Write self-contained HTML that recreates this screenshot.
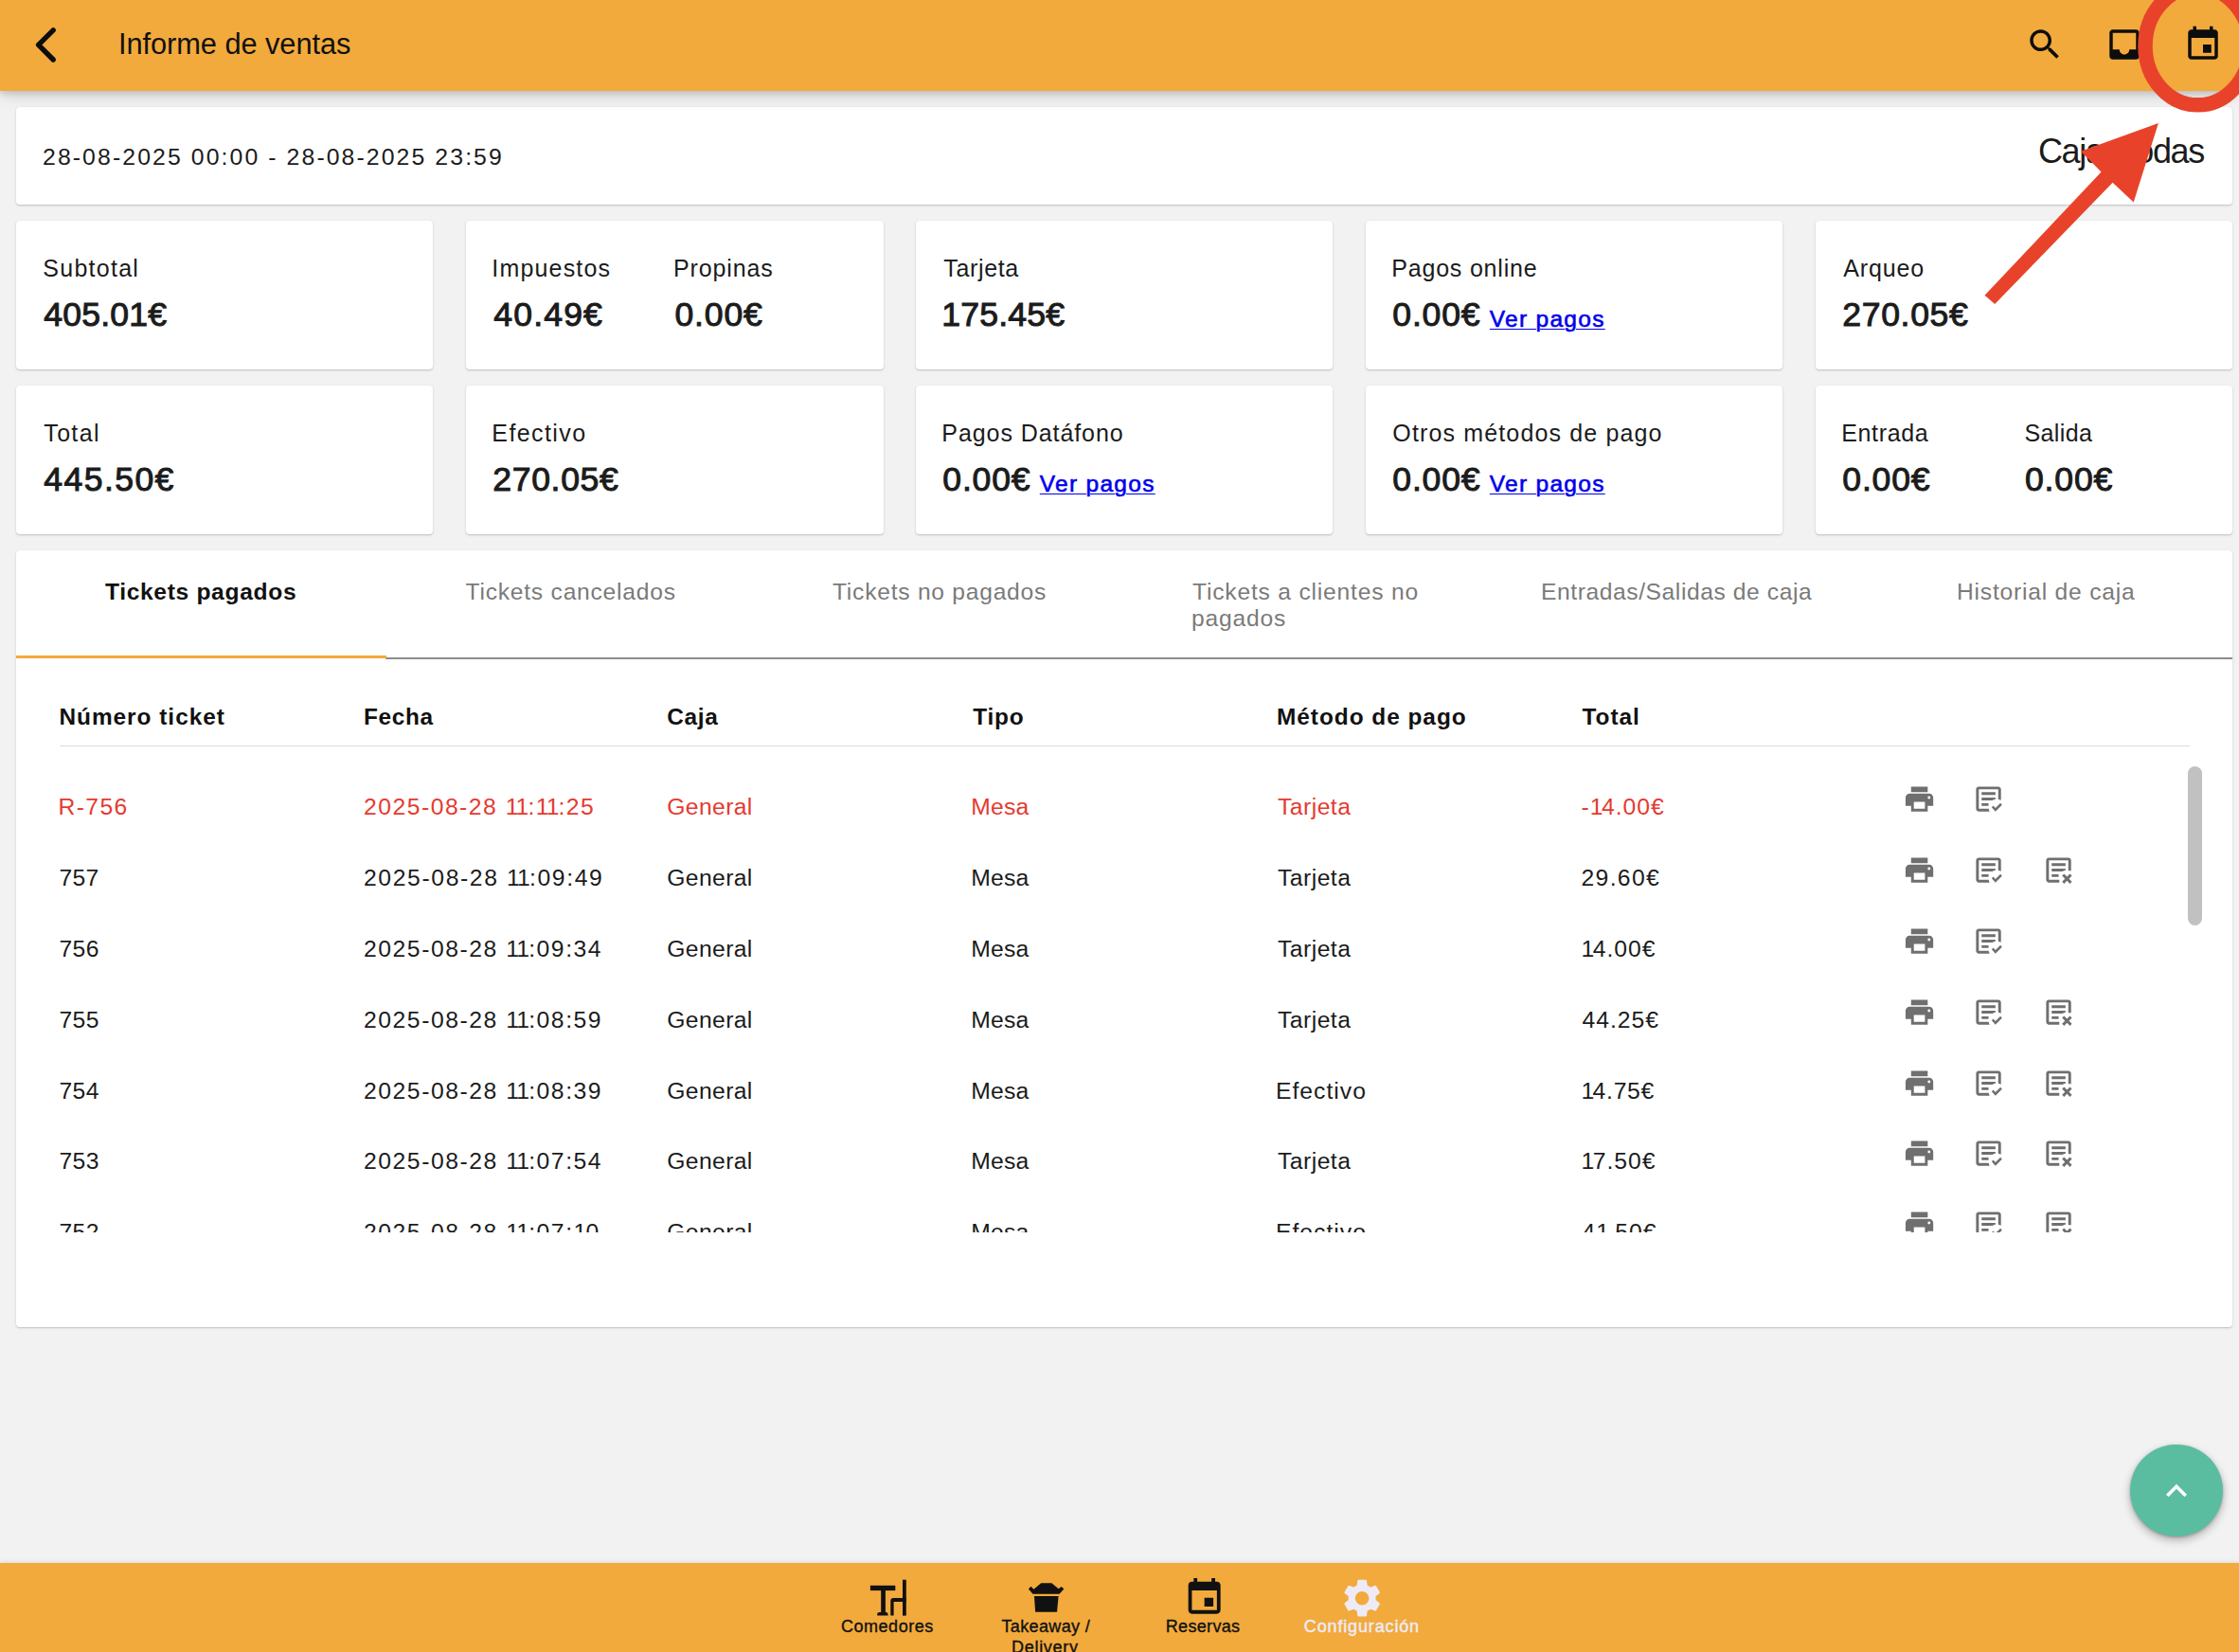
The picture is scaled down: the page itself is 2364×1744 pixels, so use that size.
<!DOCTYPE html>
<html><head><meta charset="utf-8">
<style>
html,body{margin:0;padding:0;}
body{width:2364px;height:1744px;position:relative;overflow:hidden;background:#f2f2f2;font-family:"Liberation Sans", sans-serif;}
.t{position:absolute;white-space:nowrap;line-height:1;z-index:3;}
.ic{position:absolute;display:block;z-index:3;}
.hdr{position:absolute;left:0;top:0;width:2364px;height:96px;background:#f2aa3c;box-shadow:0 2px 6px rgba(0,0,0,0.13),0 5px 14px rgba(0,0,0,0.15);z-index:2;}
.card{position:absolute;background:#fff;border-radius:4px;box-shadow:0 1px 2.5px rgba(0,0,0,0.17),0 0.5px 1px rgba(0,0,0,0.06);}
.clip{position:absolute;left:0;top:787px;width:2364px;height:514px;overflow:hidden;}
.clip .t,.clip .ic{}
.nav{position:absolute;left:0;top:1650px;width:2364px;height:94px;background:#f2aa3c;box-shadow:0 -1px 4px rgba(0,0,0,0.10);}
.fab{position:absolute;left:2249.3px;top:1524.8px;width:97.6px;height:97.6px;border-radius:50%;background:#5bbd9f;box-shadow:0 4px 10px rgba(0,0,0,0.28),0 1px 3px rgba(0,0,0,0.2);}
</style></head>
<body>
<div class="hdr">
<svg class="ic" style="left:0;top:0" width="120" height="96" viewBox="0 0 120 96"><polyline points="56.2,31.8 40.6,47.4 56.2,63" fill="none" stroke="#0d0d0d" stroke-width="5.4" stroke-linecap="round" stroke-linejoin="round"/></svg>
<svg class="ic" style="left:2138.00px;top:26.30px;width:42px;height:42px" viewBox="0 0 24 24"><path fill="#0d0d0d" d="M15.5 14h-.79l-.28-.27C15.41 12.59 16 11.11 16 9.5 16 5.91 13.09 3 9.5 3S3 5.91 3 9.5 5.91 16 9.5 16c1.61 0 3.09-.59 4.23-1.57l.27.28v.79l5 4.99L20.49 19l-4.99-5zm-6 0C7.01 14 5 11.99 5 9.5S7.01 5 9.5 5 14 7.01 14 9.5 11.99 14 9.5 14z"/></svg><svg class="ic" style="left:2221.50px;top:26.30px;width:42px;height:42px" viewBox="0 0 24 24"><path fill="#0d0d0d" d="M19 3H4.99c-1.11 0-1.98.9-1.98 2L3 19c0 1.1.88 2 1.99 2H19c1.1 0 2-.9 2-2V5c0-1.1-.9-2-2-2zm0 12h-4c0 1.66-1.35 3-3 3s-3-1.34-3-3H4.99V5H19v10z"/></svg><svg class="ic" style="left:2305.00px;top:25.90px;width:42px;height:42px" viewBox="0 0 24 24"><path fill="#0d0d0d" d="M17 12h-5v5h5v-5zM16 1v2H8V1H6v2H5c-1.11 0-1.99.9-1.99 2L3 19c0 1.1.89 2 2 2h14c1.1 0 2-.9 2-2V5c0-1.1-.9-2-2-2h-1V1h-2zm3 18H5V8h14v11z"/></svg>
</div>
<div class="card" style="left:17px;top:113px;width:2340px;height:103px;"></div>
<div class="card" style="left:17px;top:233px;width:440px;height:157px;"></div>
<div class="card" style="left:492px;top:233px;width:441px;height:157px;"></div>
<div class="card" style="left:967px;top:233px;width:440px;height:157px;"></div>
<div class="card" style="left:1442px;top:233px;width:440px;height:157px;"></div>
<div class="card" style="left:1917px;top:233px;width:440px;height:157px;"></div>
<div class="card" style="left:17px;top:407px;width:440px;height:157px;"></div>
<div class="card" style="left:492px;top:407px;width:441px;height:157px;"></div>
<div class="card" style="left:967px;top:407px;width:440px;height:157px;"></div>
<div class="card" style="left:1442px;top:407px;width:440px;height:157px;"></div>
<div class="card" style="left:1917px;top:407px;width:440px;height:157px;"></div>
<div class="card" style="left:17px;top:581px;width:2340px;height:820px;"></div>
<div style="position:absolute;left:407px;top:694px;width:1950px;height:2px;background:#8c8c8c;"></div>
<div style="position:absolute;left:17px;top:692px;width:391px;height:3px;background:#f2aa3c;"></div>
<div style="position:absolute;left:63px;top:787px;width:2249px;height:1px;background:#dcdcdc;"></div>
<div style="position:absolute;left:2310px;top:809px;width:15px;height:168px;border-radius:8px;background:#c1c1c1;"></div>
<div class="t" style="left:125.00px;top:31.93px;font-size:30.8px;font-weight:400;letter-spacing:-0.069px;color:#111;">Informe de ventas</div>
<div class="t" style="left:45.00px;top:154.01px;font-size:24.8px;font-weight:400;letter-spacing:2.094px;color:#1b1b1b;">28-08-2025 00:00 - 28-08-2025 23:59</div>
<div class="t" style="left:2151.89px;top:142.33px;font-size:36.0px;font-weight:400;letter-spacing:-1.3px;color:#1b1b1b;">Caja: Todas</div>
<div class="t" style="left:45.30px;top:271.44px;font-size:25px;font-weight:400;letter-spacing:1.26px;color:#1b1b1b;">Subtotal</div>
<div class="t" style="left:46.30px;top:315.46px;font-size:35.6px;font-weight:400;letter-spacing:0.197px;color:#1b1b1b;-webkit-text-stroke:1.0px #1b1b1b;">405.01€</div>
<div class="t" style="left:519.30px;top:271.44px;font-size:25px;font-weight:400;letter-spacing:1.171px;color:#1b1b1b;">Impuestos</div>
<div class="t" style="left:521.30px;top:315.46px;font-size:35.6px;font-weight:400;letter-spacing:1.154px;color:#1b1b1b;-webkit-text-stroke:1.0px #1b1b1b;">40.49€</div>
<div class="t" style="left:711.00px;top:271.44px;font-size:25px;font-weight:400;letter-spacing:0.876px;color:#1b1b1b;">Propinas</div>
<div class="t" style="left:712.50px;top:315.46px;font-size:35.6px;font-weight:400;letter-spacing:0.814px;color:#1b1b1b;-webkit-text-stroke:1.0px #1b1b1b;">0.00€</div>
<div class="t" style="left:996.30px;top:271.44px;font-size:25px;font-weight:400;letter-spacing:0.645px;color:#1b1b1b;">Tarjeta</div>
<div class="t" style="left:994.30px;top:315.46px;font-size:35.6px;font-weight:400;letter-spacing:0.197px;color:#1b1b1b;-webkit-text-stroke:1.0px #1b1b1b;">175.45€</div>
<div class="t" style="left:1469.30px;top:271.44px;font-size:25px;font-weight:400;letter-spacing:0.795px;color:#1b1b1b;">Pagos online</div>
<div class="t" style="left:1470.30px;top:315.46px;font-size:35.6px;font-weight:400;letter-spacing:0.814px;color:#1b1b1b;-webkit-text-stroke:1.0px #1b1b1b;">0.00€</div>
<div class="t" style="left:1946.30px;top:271.44px;font-size:25px;font-weight:400;letter-spacing:0.838px;color:#1b1b1b;">Arqueo</div>
<div class="t" style="left:1945.30px;top:315.46px;font-size:35.6px;font-weight:400;letter-spacing:0.647px;color:#1b1b1b;-webkit-text-stroke:1.0px #1b1b1b;">270.05€</div>
<div class="t" style="left:46.30px;top:445.14px;font-size:25px;font-weight:400;letter-spacing:1.337px;color:#1b1b1b;">Total</div>
<div class="t" style="left:46.30px;top:489.26px;font-size:35.6px;font-weight:400;letter-spacing:1.413px;color:#1b1b1b;-webkit-text-stroke:1.0px #1b1b1b;">445.50€</div>
<div class="t" style="left:519.30px;top:445.14px;font-size:25px;font-weight:400;letter-spacing:1.411px;color:#1b1b1b;">Efectivo</div>
<div class="t" style="left:520.30px;top:489.26px;font-size:35.6px;font-weight:400;letter-spacing:0.647px;color:#1b1b1b;-webkit-text-stroke:1.0px #1b1b1b;">270.05€</div>
<div class="t" style="left:994.30px;top:445.14px;font-size:25px;font-weight:400;letter-spacing:0.931px;color:#1b1b1b;">Pagos Datáfono</div>
<div class="t" style="left:995.30px;top:489.26px;font-size:35.6px;font-weight:400;letter-spacing:0.814px;color:#1b1b1b;-webkit-text-stroke:1.0px #1b1b1b;">0.00€</div>
<div class="t" style="left:1470.30px;top:445.14px;font-size:25px;font-weight:400;letter-spacing:1.147px;color:#1b1b1b;">Otros métodos de pago</div>
<div class="t" style="left:1470.30px;top:489.26px;font-size:35.6px;font-weight:400;letter-spacing:0.814px;color:#1b1b1b;-webkit-text-stroke:1.0px #1b1b1b;">0.00€</div>
<div class="t" style="left:1944.30px;top:445.14px;font-size:25px;font-weight:400;letter-spacing:0.624px;color:#1b1b1b;">Entrada</div>
<div class="t" style="left:1945.30px;top:489.26px;font-size:35.6px;font-weight:400;letter-spacing:0.814px;color:#1b1b1b;-webkit-text-stroke:1.0px #1b1b1b;">0.00€</div>
<div class="t" style="left:2137.50px;top:445.14px;font-size:25px;font-weight:400;letter-spacing:0.382px;color:#1b1b1b;">Salida</div>
<div class="t" style="left:2138.00px;top:489.26px;font-size:35.6px;font-weight:400;letter-spacing:0.814px;color:#1b1b1b;-webkit-text-stroke:1.0px #1b1b1b;">0.00€</div>
<div class="t" style="left:110.90px;top:612.78px;font-size:24.6px;font-weight:700;letter-spacing:0.672px;color:#111;">Tickets pagados</div>
<div class="t" style="left:491.50px;top:612.78px;font-size:24.6px;font-weight:400;letter-spacing:0.78px;color:#7a7a7a;">Tickets cancelados</div>
<div class="t" style="left:879.00px;top:612.78px;font-size:24.6px;font-weight:400;letter-spacing:0.761px;color:#7a7a7a;">Tickets no pagados</div>
<div class="t" style="left:1259.00px;top:612.78px;font-size:24.6px;font-weight:400;letter-spacing:0.809px;color:#7a7a7a;">Tickets a clientes no</div>
<div class="t" style="left:1258.00px;top:640.98px;font-size:24.6px;font-weight:400;letter-spacing:0.822px;color:#7a7a7a;">pagados</div>
<div class="t" style="left:1627.00px;top:612.78px;font-size:24.6px;font-weight:400;letter-spacing:0.592px;color:#7a7a7a;">Entradas/Salidas de caja</div>
<div class="t" style="left:2066.00px;top:612.78px;font-size:24.6px;font-weight:400;letter-spacing:0.794px;color:#7a7a7a;">Historial de caja</div>
<div class="t" style="left:62.40px;top:744.95px;font-size:24.4px;font-weight:700;letter-spacing:0.99px;color:#111;">Número ticket</div>
<div class="t" style="left:384.00px;top:744.95px;font-size:24.4px;font-weight:700;letter-spacing:0.618px;color:#111;">Fecha</div>
<div class="t" style="left:704.30px;top:744.95px;font-size:24.4px;font-weight:700;letter-spacing:0.681px;color:#111;">Caja</div>
<div class="t" style="left:1027.30px;top:744.95px;font-size:24.4px;font-weight:700;letter-spacing:0.789px;color:#111;">Tipo</div>
<div class="t" style="left:1348.00px;top:744.95px;font-size:24.4px;font-weight:700;letter-spacing:0.978px;color:#111;">Método de pago</div>
<div class="t" style="left:1670.50px;top:744.95px;font-size:24.4px;font-weight:700;letter-spacing:0.957px;color:#111;">Total</div>
<div class="t" style="left:888.00px;top:1708.16px;font-size:18px;font-weight:400;letter-spacing:0.52px;color:#111;-webkit-text-stroke:0.35px #111;">Comedores</div>
<div class="t" style="left:1057.50px;top:1708.16px;font-size:18px;font-weight:400;letter-spacing:0.351px;color:#111;-webkit-text-stroke:0.35px #111;">Takeaway /</div>
<div class="t" style="left:1068.00px;top:1730.16px;font-size:18px;font-weight:400;letter-spacing:0.712px;color:#111;-webkit-text-stroke:0.35px #111;">Delivery</div>
<div class="t" style="left:1230.80px;top:1708.16px;font-size:18px;font-weight:400;letter-spacing:0.325px;color:#111;-webkit-text-stroke:0.35px #111;">Reservas</div>
<div class="t" style="left:1376.80px;top:1708.16px;font-size:18px;font-weight:400;letter-spacing:0.854px;color:#eeebf6;-webkit-text-stroke:0.45px #eeebf6;">Configuración</div>
<div class="t" style="left:1572.80px;top:324.86px;font-size:24.5px;font-weight:400;letter-spacing:1.29px;color:#0000ee;text-decoration:underline;text-underline-offset:1.6px;text-decoration-thickness:1.3px;-webkit-text-stroke:0.6px #0000ee;">Ver pagos</div>
<div class="t" style="left:1097.80px;top:498.66px;font-size:24.5px;font-weight:400;letter-spacing:1.29px;color:#0000ee;text-decoration:underline;text-underline-offset:1.6px;text-decoration-thickness:1.3px;-webkit-text-stroke:0.6px #0000ee;">Ver pagos</div>
<div class="t" style="left:1572.80px;top:498.66px;font-size:24.5px;font-weight:400;letter-spacing:1.29px;color:#0000ee;text-decoration:underline;text-underline-offset:1.6px;text-decoration-thickness:1.3px;-webkit-text-stroke:0.6px #0000ee;">Ver pagos</div>
<div class="clip">
<div style="position:absolute;left:0;top:-787px;width:2364px;height:1744px;">
<div class="t" style="left:61.40px;top:840.39px;font-size:24.7px;font-weight:400;letter-spacing:1.423px;color:#e53a2f;">R-756</div>
<div class="t" style="left:384.00px;top:840.39px;font-size:24.7px;font-weight:400;letter-spacing:1.502px;color:#e53a2f;">2025-08-28 <span style="letter-spacing:-0.968px">1</span><span style="letter-spacing:-0.968px">1</span>:<span style="letter-spacing:-0.968px">1</span><span style="letter-spacing:-0.968px">1</span>:25</div>
<div class="t" style="left:704.30px;top:840.39px;font-size:24.7px;font-weight:400;letter-spacing:0.359px;color:#e53a2f;">General</div>
<div class="t" style="left:1025.30px;top:840.39px;font-size:24.7px;font-weight:400;letter-spacing:0.22px;color:#e53a2f;">Mesa</div>
<div class="t" style="left:1349.00px;top:840.39px;font-size:24.7px;font-weight:400;letter-spacing:0.472px;color:#e53a2f;">Tarjeta</div>
<div class="t" style="left:1669.50px;top:840.39px;font-size:24.7px;font-weight:400;letter-spacing:1.0px;color:#e53a2f;">-<span style="letter-spacing:-1.470px">1</span>4.00€</div>
<div class="t" style="left:62.40px;top:915.19px;font-size:24.7px;font-weight:400;letter-spacing:0.27px;color:#1b1b1b;">757</div>
<div class="t" style="left:384.00px;top:915.19px;font-size:24.7px;font-weight:400;letter-spacing:1.626px;color:#1b1b1b;">2025-08-28 <span style="letter-spacing:-0.844px">1</span><span style="letter-spacing:-0.844px">1</span>:09:49</div>
<div class="t" style="left:704.30px;top:915.19px;font-size:24.7px;font-weight:400;letter-spacing:0.359px;color:#1b1b1b;">General</div>
<div class="t" style="left:1025.30px;top:915.19px;font-size:24.7px;font-weight:400;letter-spacing:0.22px;color:#1b1b1b;">Mesa</div>
<div class="t" style="left:1349.00px;top:915.19px;font-size:24.7px;font-weight:400;letter-spacing:0.472px;color:#1b1b1b;">Tarjeta</div>
<div class="t" style="left:1669.50px;top:915.19px;font-size:24.7px;font-weight:400;letter-spacing:1.344px;color:#1b1b1b;">29.60€</div>
<div class="t" style="left:62.40px;top:989.99px;font-size:24.7px;font-weight:400;letter-spacing:0.5px;color:#1b1b1b;">756</div>
<div class="t" style="left:384.00px;top:989.99px;font-size:24.7px;font-weight:400;letter-spacing:1.56px;color:#1b1b1b;">2025-08-28 <span style="letter-spacing:-0.910px">1</span><span style="letter-spacing:-0.910px">1</span>:09:34</div>
<div class="t" style="left:704.30px;top:989.99px;font-size:24.7px;font-weight:400;letter-spacing:0.359px;color:#1b1b1b;">General</div>
<div class="t" style="left:1025.30px;top:989.99px;font-size:24.7px;font-weight:400;letter-spacing:0.22px;color:#1b1b1b;">Mesa</div>
<div class="t" style="left:1349.00px;top:989.99px;font-size:24.7px;font-weight:400;letter-spacing:0.472px;color:#1b1b1b;">Tarjeta</div>
<div class="t" style="left:1669.50px;top:989.99px;font-size:24.7px;font-weight:400;letter-spacing:1.0px;color:#1b1b1b;"><span style="letter-spacing:-1.470px">1</span>4.00€</div>
<div class="t" style="left:62.40px;top:1064.79px;font-size:24.7px;font-weight:400;letter-spacing:0.5px;color:#1b1b1b;">755</div>
<div class="t" style="left:384.00px;top:1064.79px;font-size:24.7px;font-weight:400;letter-spacing:1.56px;color:#1b1b1b;">2025-08-28 <span style="letter-spacing:-0.910px">1</span><span style="letter-spacing:-0.910px">1</span>:08:59</div>
<div class="t" style="left:704.30px;top:1064.79px;font-size:24.7px;font-weight:400;letter-spacing:0.359px;color:#1b1b1b;">General</div>
<div class="t" style="left:1025.30px;top:1064.79px;font-size:24.7px;font-weight:400;letter-spacing:0.22px;color:#1b1b1b;">Mesa</div>
<div class="t" style="left:1349.00px;top:1064.79px;font-size:24.7px;font-weight:400;letter-spacing:0.472px;color:#1b1b1b;">Tarjeta</div>
<div class="t" style="left:1670.50px;top:1064.79px;font-size:24.7px;font-weight:400;letter-spacing:1.0px;color:#1b1b1b;">44.25€</div>
<div class="t" style="left:62.40px;top:1139.59px;font-size:24.7px;font-weight:400;letter-spacing:0.5px;color:#1b1b1b;">754</div>
<div class="t" style="left:384.00px;top:1139.59px;font-size:24.7px;font-weight:400;letter-spacing:1.56px;color:#1b1b1b;">2025-08-28 <span style="letter-spacing:-0.910px">1</span><span style="letter-spacing:-0.910px">1</span>:08:39</div>
<div class="t" style="left:704.30px;top:1139.59px;font-size:24.7px;font-weight:400;letter-spacing:0.359px;color:#1b1b1b;">General</div>
<div class="t" style="left:1025.30px;top:1139.59px;font-size:24.7px;font-weight:400;letter-spacing:0.22px;color:#1b1b1b;">Mesa</div>
<div class="t" style="left:1347.00px;top:1139.59px;font-size:24.7px;font-weight:400;letter-spacing:1.016px;color:#1b1b1b;">Efectivo</div>
<div class="t" style="left:1669.50px;top:1139.59px;font-size:24.7px;font-weight:400;letter-spacing:0.758px;color:#1b1b1b;"><span style="letter-spacing:-1.712px">1</span>4.75€</div>
<div class="t" style="left:62.40px;top:1214.39px;font-size:24.7px;font-weight:400;letter-spacing:0.5px;color:#1b1b1b;">753</div>
<div class="t" style="left:384.00px;top:1214.39px;font-size:24.7px;font-weight:400;letter-spacing:1.56px;color:#1b1b1b;">2025-08-28 <span style="letter-spacing:-0.910px">1</span><span style="letter-spacing:-0.910px">1</span>:07:54</div>
<div class="t" style="left:704.30px;top:1214.39px;font-size:24.7px;font-weight:400;letter-spacing:0.359px;color:#1b1b1b;">General</div>
<div class="t" style="left:1025.30px;top:1214.39px;font-size:24.7px;font-weight:400;letter-spacing:0.22px;color:#1b1b1b;">Mesa</div>
<div class="t" style="left:1349.00px;top:1214.39px;font-size:24.7px;font-weight:400;letter-spacing:0.472px;color:#1b1b1b;">Tarjeta</div>
<div class="t" style="left:1669.50px;top:1214.39px;font-size:24.7px;font-weight:400;letter-spacing:1.0px;color:#1b1b1b;"><span style="letter-spacing:-1.470px">1</span>7.50€</div>
<div class="t" style="left:62.40px;top:1289.19px;font-size:24.7px;font-weight:400;letter-spacing:0.5px;color:#1b1b1b;">752</div>
<div class="t" style="left:384.00px;top:1289.19px;font-size:24.7px;font-weight:400;letter-spacing:1.56px;color:#1b1b1b;">2025-08-28 <span style="letter-spacing:-0.910px">1</span><span style="letter-spacing:-0.910px">1</span>:07:<span style="letter-spacing:-0.910px">1</span>0</div>
<div class="t" style="left:704.30px;top:1289.19px;font-size:24.7px;font-weight:400;letter-spacing:0.359px;color:#1b1b1b;">General</div>
<div class="t" style="left:1025.30px;top:1289.19px;font-size:24.7px;font-weight:400;letter-spacing:0.22px;color:#1b1b1b;">Mesa</div>
<div class="t" style="left:1347.00px;top:1289.19px;font-size:24.7px;font-weight:400;letter-spacing:1.016px;color:#1b1b1b;">Efectivo</div>
<div class="t" style="left:1670.50px;top:1289.19px;font-size:24.7px;font-weight:400;letter-spacing:1.0px;color:#1b1b1b;">4<span style="letter-spacing:-1.470px">1</span>.50€</div>
<svg class="ic" style="left:2009.10px;top:826.40px;width:35.1px;height:35.1px" viewBox="0 0 24 24"><path fill="#6f6f6f" d="M18,3H6V7H18M19,12A1,1 0 0,1 18,11A1,1 0 0,1 19,10A1,1 0 0,1 20,11A1,1 0 0,1 19,12M16,19H8V14H16M19,8H5A3,3 0 0,0 2,11V17H6V21H18V17H22V11A3,3 0 0,0 19,8Z"/></svg>
<svg class="ic" style="left:2082.40px;top:826.40px;width:35.1px;height:35.1px" viewBox="0 0 24 24"><path fill="#6f6f6f" d="M17,21L14.25,18L15.41,16.84L17,18.43L20.59,14.84L21.75,16.25M12.8,21H5C3.89,21 3,20.11 3,19V5C3,3.89 3.89,3 5,3H19C20.11,3 21,3.89 21,5V12.8C20.39,12.45 19.72,12.2 19,12.08V5H5V19H12.08C12.2,19.72 12.45,20.39 12.8,21M12,17H7V15H12M14.68,13H7V11H17V12.1C16.15,12.25 15.37,12.57 14.68,13M17,9H7V7H17"/></svg>
<svg class="ic" style="left:2009.10px;top:901.20px;width:35.1px;height:35.1px" viewBox="0 0 24 24"><path fill="#6f6f6f" d="M18,3H6V7H18M19,12A1,1 0 0,1 18,11A1,1 0 0,1 19,10A1,1 0 0,1 20,11A1,1 0 0,1 19,12M16,19H8V14H16M19,8H5A3,3 0 0,0 2,11V17H6V21H18V17H22V11A3,3 0 0,0 19,8Z"/></svg>
<svg class="ic" style="left:2082.40px;top:901.20px;width:35.1px;height:35.1px" viewBox="0 0 24 24"><path fill="#6f6f6f" d="M17,21L14.25,18L15.41,16.84L17,18.43L20.59,14.84L21.75,16.25M12.8,21H5C3.89,21 3,20.11 3,19V5C3,3.89 3.89,3 5,3H19C20.11,3 21,3.89 21,5V12.8C20.39,12.45 19.72,12.2 19,12.08V5H5V19H12.08C12.2,19.72 12.45,20.39 12.8,21M12,17H7V15H12M14.68,13H7V11H17V12.1C16.15,12.25 15.37,12.57 14.68,13M17,9H7V7H17"/></svg>
<svg class="ic" style="left:2155.50px;top:901.20px;width:35.1px;height:35.1px" viewBox="0 0 24 24"><path fill="#6f6f6f" d="M12.5,21H5C3.89,21 3,20.11 3,19V5C3,3.89 3.89,3 5,3H19C20.11,3 21,3.89 21,5V12.5H19V5H5V19H12.5Z M12,17H7V15H12M14.68,13H7V11H17V12.1C16.15,12.25 15.37,12.57 14.68,13M17,9H7V7H17 M15.95,14.70 L18.05,16.80 L20.15,14.70 L21.60,16.15 L19.50,18.25 L21.60,20.35 L20.15,21.80 L18.05,19.70 L15.95,21.80 L14.50,20.35 L16.60,18.25 L14.50,16.15Z"/></svg>
<svg class="ic" style="left:2009.10px;top:976.00px;width:35.1px;height:35.1px" viewBox="0 0 24 24"><path fill="#6f6f6f" d="M18,3H6V7H18M19,12A1,1 0 0,1 18,11A1,1 0 0,1 19,10A1,1 0 0,1 20,11A1,1 0 0,1 19,12M16,19H8V14H16M19,8H5A3,3 0 0,0 2,11V17H6V21H18V17H22V11A3,3 0 0,0 19,8Z"/></svg>
<svg class="ic" style="left:2082.40px;top:976.00px;width:35.1px;height:35.1px" viewBox="0 0 24 24"><path fill="#6f6f6f" d="M17,21L14.25,18L15.41,16.84L17,18.43L20.59,14.84L21.75,16.25M12.8,21H5C3.89,21 3,20.11 3,19V5C3,3.89 3.89,3 5,3H19C20.11,3 21,3.89 21,5V12.8C20.39,12.45 19.72,12.2 19,12.08V5H5V19H12.08C12.2,19.72 12.45,20.39 12.8,21M12,17H7V15H12M14.68,13H7V11H17V12.1C16.15,12.25 15.37,12.57 14.68,13M17,9H7V7H17"/></svg>
<svg class="ic" style="left:2009.10px;top:1050.80px;width:35.1px;height:35.1px" viewBox="0 0 24 24"><path fill="#6f6f6f" d="M18,3H6V7H18M19,12A1,1 0 0,1 18,11A1,1 0 0,1 19,10A1,1 0 0,1 20,11A1,1 0 0,1 19,12M16,19H8V14H16M19,8H5A3,3 0 0,0 2,11V17H6V21H18V17H22V11A3,3 0 0,0 19,8Z"/></svg>
<svg class="ic" style="left:2082.40px;top:1050.80px;width:35.1px;height:35.1px" viewBox="0 0 24 24"><path fill="#6f6f6f" d="M17,21L14.25,18L15.41,16.84L17,18.43L20.59,14.84L21.75,16.25M12.8,21H5C3.89,21 3,20.11 3,19V5C3,3.89 3.89,3 5,3H19C20.11,3 21,3.89 21,5V12.8C20.39,12.45 19.72,12.2 19,12.08V5H5V19H12.08C12.2,19.72 12.45,20.39 12.8,21M12,17H7V15H12M14.68,13H7V11H17V12.1C16.15,12.25 15.37,12.57 14.68,13M17,9H7V7H17"/></svg>
<svg class="ic" style="left:2155.50px;top:1050.80px;width:35.1px;height:35.1px" viewBox="0 0 24 24"><path fill="#6f6f6f" d="M12.5,21H5C3.89,21 3,20.11 3,19V5C3,3.89 3.89,3 5,3H19C20.11,3 21,3.89 21,5V12.5H19V5H5V19H12.5Z M12,17H7V15H12M14.68,13H7V11H17V12.1C16.15,12.25 15.37,12.57 14.68,13M17,9H7V7H17 M15.95,14.70 L18.05,16.80 L20.15,14.70 L21.60,16.15 L19.50,18.25 L21.60,20.35 L20.15,21.80 L18.05,19.70 L15.95,21.80 L14.50,20.35 L16.60,18.25 L14.50,16.15Z"/></svg>
<svg class="ic" style="left:2009.10px;top:1125.60px;width:35.1px;height:35.1px" viewBox="0 0 24 24"><path fill="#6f6f6f" d="M18,3H6V7H18M19,12A1,1 0 0,1 18,11A1,1 0 0,1 19,10A1,1 0 0,1 20,11A1,1 0 0,1 19,12M16,19H8V14H16M19,8H5A3,3 0 0,0 2,11V17H6V21H18V17H22V11A3,3 0 0,0 19,8Z"/></svg>
<svg class="ic" style="left:2082.40px;top:1125.60px;width:35.1px;height:35.1px" viewBox="0 0 24 24"><path fill="#6f6f6f" d="M17,21L14.25,18L15.41,16.84L17,18.43L20.59,14.84L21.75,16.25M12.8,21H5C3.89,21 3,20.11 3,19V5C3,3.89 3.89,3 5,3H19C20.11,3 21,3.89 21,5V12.8C20.39,12.45 19.72,12.2 19,12.08V5H5V19H12.08C12.2,19.72 12.45,20.39 12.8,21M12,17H7V15H12M14.68,13H7V11H17V12.1C16.15,12.25 15.37,12.57 14.68,13M17,9H7V7H17"/></svg>
<svg class="ic" style="left:2155.50px;top:1125.60px;width:35.1px;height:35.1px" viewBox="0 0 24 24"><path fill="#6f6f6f" d="M12.5,21H5C3.89,21 3,20.11 3,19V5C3,3.89 3.89,3 5,3H19C20.11,3 21,3.89 21,5V12.5H19V5H5V19H12.5Z M12,17H7V15H12M14.68,13H7V11H17V12.1C16.15,12.25 15.37,12.57 14.68,13M17,9H7V7H17 M15.95,14.70 L18.05,16.80 L20.15,14.70 L21.60,16.15 L19.50,18.25 L21.60,20.35 L20.15,21.80 L18.05,19.70 L15.95,21.80 L14.50,20.35 L16.60,18.25 L14.50,16.15Z"/></svg>
<svg class="ic" style="left:2009.10px;top:1200.40px;width:35.1px;height:35.1px" viewBox="0 0 24 24"><path fill="#6f6f6f" d="M18,3H6V7H18M19,12A1,1 0 0,1 18,11A1,1 0 0,1 19,10A1,1 0 0,1 20,11A1,1 0 0,1 19,12M16,19H8V14H16M19,8H5A3,3 0 0,0 2,11V17H6V21H18V17H22V11A3,3 0 0,0 19,8Z"/></svg>
<svg class="ic" style="left:2082.40px;top:1200.40px;width:35.1px;height:35.1px" viewBox="0 0 24 24"><path fill="#6f6f6f" d="M17,21L14.25,18L15.41,16.84L17,18.43L20.59,14.84L21.75,16.25M12.8,21H5C3.89,21 3,20.11 3,19V5C3,3.89 3.89,3 5,3H19C20.11,3 21,3.89 21,5V12.8C20.39,12.45 19.72,12.2 19,12.08V5H5V19H12.08C12.2,19.72 12.45,20.39 12.8,21M12,17H7V15H12M14.68,13H7V11H17V12.1C16.15,12.25 15.37,12.57 14.68,13M17,9H7V7H17"/></svg>
<svg class="ic" style="left:2155.50px;top:1200.40px;width:35.1px;height:35.1px" viewBox="0 0 24 24"><path fill="#6f6f6f" d="M12.5,21H5C3.89,21 3,20.11 3,19V5C3,3.89 3.89,3 5,3H19C20.11,3 21,3.89 21,5V12.5H19V5H5V19H12.5Z M12,17H7V15H12M14.68,13H7V11H17V12.1C16.15,12.25 15.37,12.57 14.68,13M17,9H7V7H17 M15.95,14.70 L18.05,16.80 L20.15,14.70 L21.60,16.15 L19.50,18.25 L21.60,20.35 L20.15,21.80 L18.05,19.70 L15.95,21.80 L14.50,20.35 L16.60,18.25 L14.50,16.15Z"/></svg>
<svg class="ic" style="left:2009.10px;top:1275.20px;width:35.1px;height:35.1px" viewBox="0 0 24 24"><path fill="#6f6f6f" d="M18,3H6V7H18M19,12A1,1 0 0,1 18,11A1,1 0 0,1 19,10A1,1 0 0,1 20,11A1,1 0 0,1 19,12M16,19H8V14H16M19,8H5A3,3 0 0,0 2,11V17H6V21H18V17H22V11A3,3 0 0,0 19,8Z"/></svg>
<svg class="ic" style="left:2082.40px;top:1275.20px;width:35.1px;height:35.1px" viewBox="0 0 24 24"><path fill="#6f6f6f" d="M17,21L14.25,18L15.41,16.84L17,18.43L20.59,14.84L21.75,16.25M12.8,21H5C3.89,21 3,20.11 3,19V5C3,3.89 3.89,3 5,3H19C20.11,3 21,3.89 21,5V12.8C20.39,12.45 19.72,12.2 19,12.08V5H5V19H12.08C12.2,19.72 12.45,20.39 12.8,21M12,17H7V15H12M14.68,13H7V11H17V12.1C16.15,12.25 15.37,12.57 14.68,13M17,9H7V7H17"/></svg>
<svg class="ic" style="left:2155.50px;top:1275.20px;width:35.1px;height:35.1px" viewBox="0 0 24 24"><path fill="#6f6f6f" d="M12.5,21H5C3.89,21 3,20.11 3,19V5C3,3.89 3.89,3 5,3H19C20.11,3 21,3.89 21,5V12.5H19V5H5V19H12.5Z M12,17H7V15H12M14.68,13H7V11H17V12.1C16.15,12.25 15.37,12.57 14.68,13M17,9H7V7H17 M15.95,14.70 L18.05,16.80 L20.15,14.70 L21.60,16.15 L19.50,18.25 L21.60,20.35 L20.15,21.80 L18.05,19.70 L15.95,21.80 L14.50,20.35 L16.60,18.25 L14.50,16.15Z"/></svg>
</div>
</div>
<div class="nav">
<svg class="ic" style="left:0;top:0" width="2364" height="94" viewBox="0 1650 2364 94">
<g fill="#111">
<rect x="918.9" y="1673.8" width="26.4" height="5.3"/>
<rect x="930.2" y="1679" width="4.7" height="25"/>
<path d="M926.2,1705.6 L926.2,1704 Q926.2,1702 929,1702 L935,1702 Q937.6,1702 937.6,1704 L937.6,1705.6Z"/>
<rect x="953" y="1667.7" width="3.8" height="37.9"/>
<path d="M940.3,1705.6 L940.3,1690 Q940.3,1687 943.3,1687 L956.8,1687 L956.8,1691 L943.6,1691 L943.6,1705.6Z"/>
<path d="M1099.2,1671.2 L1110.4,1671.2 L1117.6,1677.3 L1120.8,1674.9 L1123.3,1677.6 L1118.5,1682.8 L1090.5,1682.8 L1085.9,1677.6 L1088.4,1674.8 L1091.5,1677.7Z"/>
<path d="M1092,1685 L1117.6,1685 L1116,1701.8 L1093.1,1701.8Z"/>
</g>
</svg>
</div>
<svg class="ic" style="left:1249.00px;top:1663.80px;width:45.3px;height:45.3px" viewBox="0 0 24 24"><path fill="#111" d="M17 12h-5v5h5v-5zM16 1v2H8V1H6v2H5c-1.11 0-1.99.9-1.99 2L3 19c0 1.1.89 2 2 2h14c1.1 0 2-.9 2-2V5c0-1.1-.9-2-2-2h-1V1h-2zm3 18H5V8h14v11z"/></svg><svg class="ic" style="left:1414.30px;top:1662.50px;width:48.3px;height:48.3px" viewBox="0 0 24 24"><path fill="#eeebf6" d="M19.14,12.94c0.04-0.3,0.06-0.61,0.06-0.94c0-0.32-0.02-0.64-0.07-0.94l2.03-1.58c0.18-0.14,0.23-0.41,0.12-0.61 l-1.92-3.32c-0.12-0.22-0.37-0.29-0.59-0.22l-2.39,0.96c-0.5-0.38-1.03-0.7-1.62-0.94L14.4,2.81c-0.04-0.24-0.24-0.41-0.48-0.41 h-3.84c-0.24,0-0.43,0.17-0.47,0.41L9.25,5.35C8.66,5.59,8.12,5.92,7.63,6.29L5.24,5.33c-0.22-0.08-0.47,0-0.59,0.22L2.74,8.87 C2.62,9.08,2.66,9.34,2.86,9.48l2.03,1.58C4.84,11.36,4.8,11.69,4.8,12s0.02,0.64,0.07,0.94l-2.03,1.58 c-0.18,0.14-0.23,0.41-0.12,0.61l1.92,3.32c0.12,0.22,0.37,0.29,0.59,0.22l2.39-0.96c0.5,0.38,1.03,0.7,1.62,0.94l0.36,2.54 c0.05,0.24,0.24,0.41,0.48,0.41h3.84c0.24,0,0.44-0.17,0.47-0.41l0.36-2.54c0.59-0.24,1.13-0.56,1.62-0.94l2.39,0.96 c0.22,0.08,0.47,0,0.59-0.22l1.92-3.32c0.12-0.22,0.07-0.47-0.12-0.61L19.14,12.94z M12,15.6c-1.98,0-3.6-1.62-3.6-3.6 s1.62-3.6,3.6-3.6s3.6,1.62,3.6,3.6S13.98,15.6,12,15.6z"/></svg>
<div class="fab"></div>
<svg class="ic" style="left:2276px;top:1551.5px;width:44px;height:44px" viewBox="0 0 24 24"><path fill="#fff" d="M12 8l-6 6 1.41 1.41L12 10.83l4.59 4.58L18 14z"/></svg>
<svg class="ic" style="left:0;top:0;z-index:5" width="2364" height="1744" viewBox="0 0 2364 1744">
<ellipse cx="2320.4" cy="48.4" rx="55.4" ry="62.45" fill="none" stroke="#e8432a" stroke-width="15.5"/>
<path d="M2278.9,130 L2252.7,213.5 L2230.6,192.8 L2106.2,321 L2095.5,311.7 L2218.6,181.6 L2196.8,159.8Z" fill="#e8432a"/>
</svg>
</body></html>
